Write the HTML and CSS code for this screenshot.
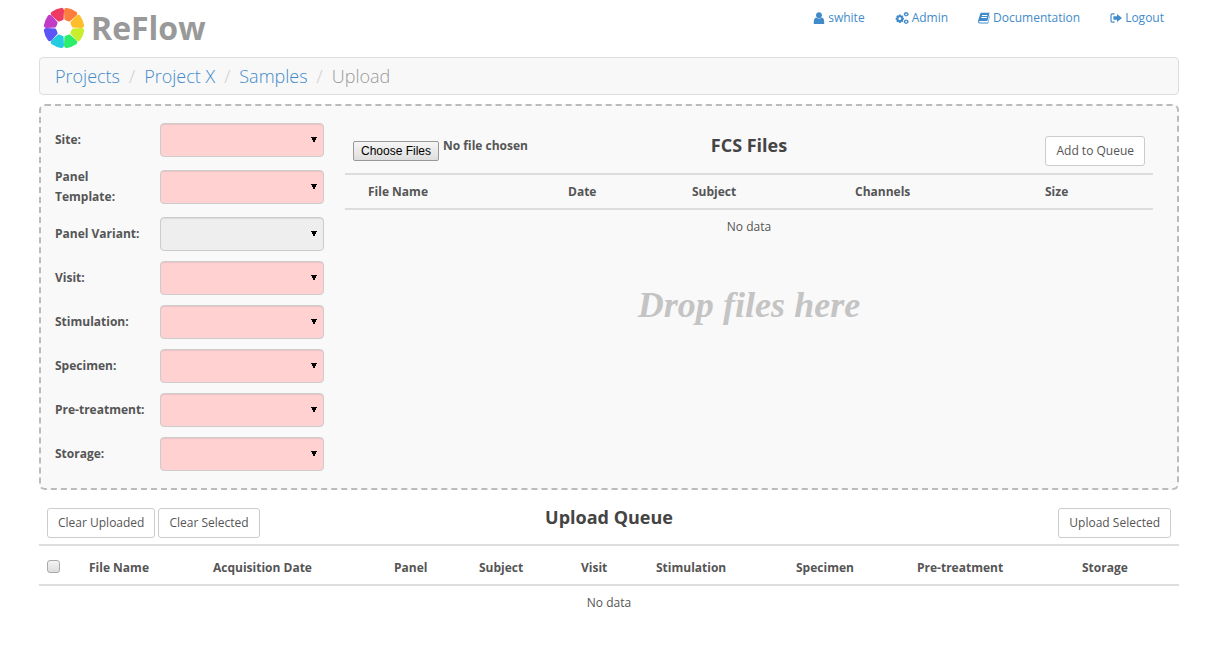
FILE: index.html
```html
<!DOCTYPE html>
<html lang="en">
<head>
    <meta charset="UTF-8">
    <title>ReFlow - Upload</title>
    <link rel="stylesheet" href="styles.css">
</head>
<body>
<div class="container">
    <header class="top">
        <a class="brand">
            <svg class="logo" viewBox="-22 -22 44 44">
                <defs>
                    <path id="petal" d="M-3-8.5 L-7-16.8 Q-8-20 -5.2-20.6 Q0-21.8 5.2-20.6 Q8-20 7-16.8 L3-8.5 Q0-7-3-8.5Z"/>
                </defs>
                <use href="#petal" fill="#ef3a62" transform="rotate(-22.5)"/>
                <use href="#petal" fill="#ff7e3e" transform="rotate(22.5)"/>
                <use href="#petal" fill="#ffbd2c" transform="rotate(67.5)"/>
                <use href="#petal" fill="#c9ee2c" transform="rotate(112.5)"/>
                <use href="#petal" fill="#2cee6a" transform="rotate(157.5)"/>
                <use href="#petal" fill="#22cde0" transform="rotate(202.5)"/>
                <use href="#petal" fill="#5b55f6" transform="rotate(247.5)"/>
                <use href="#petal" fill="#c03cc6" transform="rotate(292.5)"/>
                <circle r="8" fill="#fff"/>
            </svg>
            <span class="brand-name">ReFlow</span>
        </a>
        <nav class="top-nav">
            <a>
                <svg class="icon" viewBox="0 0 12 12"><circle cx="6" cy="3.2" r="2.9"/><path d="M0.8 12 Q0.4 6.2 3 5.6 Q6 7.4 9 5.6 Q11.6 6.2 11.2 12Z"/></svg>
                swhite
            </a>
            <a>
                <svg class="icon icon-wide" viewBox="0 0 14 12"><path fill-rule="evenodd" d="M4 2.6 L5.6 2.6 L6 3.7 L7.2 3.2 L8.3 4.3 L7.8 5.4 L9 5.9 L9 7.5 L7.8 8 L8.3 9.2 L7.2 10.3 L6 9.8 L5.6 10.9 L4 10.9 L3.6 9.8 L2.4 10.3 L1.3 9.2 L1.8 8 L0.6 7.5 L0.6 5.9 L1.8 5.4 L1.3 4.3 L2.4 3.2 L3.6 3.7Z M4.8 5.3 A1.4 1.4 0 1 0 4.8 8.1 A1.4 1.4 0 1 0 4.8 5.3Z"/><path fill-rule="evenodd" d="M11 0 L12.6 0.6 L13.8 2 L13.2 3.6 L11 4.6 L9.2 3.6 L8.6 2 L9.6 0.6Z M11.2 1.4 A0.9 0.9 0 1 0 11.2 3.2 A0.9 0.9 0 1 0 11.2 1.4Z"/><path fill-rule="evenodd" d="M11 7.4 L12.6 8 L13.8 9.4 L13.2 11 L11 12 L9.2 11 L8.6 9.4 L9.6 8Z M11.2 8.8 A0.9 0.9 0 1 0 11.2 10.6 A0.9 0.9 0 1 0 11.2 8.8Z"/></svg>
                Admin
            </a>
            <a>
                <svg class="icon" viewBox="0 0 12 12"><path d="M2.6 0.8 L11.6 0.8 L9.4 9 L1.6 9 Q1 9 1.2 10 Q1.4 10.6 2 10.6 L9.8 10.6 L11.6 3.4 L12 3.6 L10.2 11.6 L1.8 11.6 Q0 11.4 0 9.4 Q0 8.8 0.2 8.2Z M4 3 L4 3.9 L9.2 3.9 L9.4 3Z M3.4 5 L3.4 5.9 L8.7 5.9 L8.9 5Z" fill-rule="evenodd"/></svg>
                Documentation
            </a>
            <a>
                <svg class="icon" viewBox="0 0 12 12"><path d="M4.6 1.2 L2.4 1.2 Q0.4 1.2 0.4 3.2 L0.4 8.8 Q0.4 10.8 2.4 10.8 L4.6 10.8 L4.6 9.6 L2.4 9.6 Q1.6 9.6 1.6 8.8 L1.6 3.2 Q1.6 2.4 2.4 2.4 L4.6 2.4Z"/><path d="M7 2 L12 6 L7 10 L7 7.7 L3.4 7.7 L3.4 4.3 L7 4.3Z"/></svg>
                Logout
            </a>
        </nav>
    </header>

    <ol class="breadcrumb">
        <li><a>Projects</a></li>
        <li><a>Project X</a></li>
        <li><a>Samples</a></li>
        <li class="active">Upload</li>
    </ol>

    <section class="drop-panel">
        <form class="category-form">
            <div class="form-row"><label>Site:</label><select class="pick required"></select></div>
            <div class="form-row tall"><label>Panel Template:</label><select class="pick required"></select></div>
            <div class="form-row"><label>Panel Variant:</label><select class="pick"></select></div>
            <div class="form-row"><label>Visit:</label><select class="pick required"></select></div>
            <div class="form-row"><label>Stimulation:</label><select class="pick required"></select></div>
            <div class="form-row"><label>Specimen:</label><select class="pick required"></select></div>
            <div class="form-row"><label>Pre-treatment:</label><select class="pick required"></select></div>
            <div class="form-row"><label>Storage:</label><select class="pick required"></select></div>
        </form>

        <div class="file-area">
            <div class="toolbar fcs-toolbar">
                <div class="chooser"><input type="file" multiple></div>
                <h3>FCS Files</h3>
                <div class="right"><button class="btn">Add to Queue</button></div>
            </div>
            <div class="thead fcs-cols">
                <span>File Name</span><span>Date</span><span>Subject</span><span>Channels</span><span>Size</span>
            </div>
            <p class="no-data">No data</p>
            <p class="drop-hint">Drop files here</p>
        </div>
    </section>

    <section class="queue">
        <div class="toolbar queue-toolbar">
            <div class="btn-group">
                <button class="btn">Clear Uploaded</button>
                <button class="btn">Clear Selected</button>
            </div>
            <h3>Upload Queue</h3>
            <div class="right"><button class="btn">Upload Selected</button></div>
        </div>
        <div class="thead queue-cols">
            <span><input type="checkbox" class="check"></span>
            <span>File Name</span><span>Acquisition Date</span><span>Panel</span><span>Subject</span>
            <span>Visit</span><span>Stimulation</span><span>Specimen</span><span>Pre-treatment</span><span>Storage</span>
        </div>
        <p class="no-data">No data</p>
    </section>
</div>
</body>
</html>
```

FILE: styles.css
```css
body {
    margin: 0;
    font-family: "Open Sans", sans-serif;
    font-size: 12px;
    line-height: 20px;
    color: #555;
    background: #fff;
}
a {
    color: #428bca;
    text-decoration: none;
}
.container {
    width: 1140px;
    margin: 0 auto;
}

/* header */
.top {
    height: 57px;
    display: flex;
    justify-content: space-between;
}
.brand {
    display: flex;
    align-items: flex-start;
    padding: 7px 0 0 4px;
}
.logo {
    width: 42px;
    height: 42px;
}
.brand-name {
    margin-left: 6px;
    font-size: 32px;
    line-height: 42px;
    font-weight: 700;
    color: #999;
}
.top-nav {
    display: flex;
    gap: 30px;
    padding: 8px 15px 0 0;
    font-size: 12px;
}
.top-nav a {
    display: flex;
    align-items: center;
    gap: 3px;
    height: 20px;
}
.icon {
    width: 12px;
    height: 12px;
    fill: #428bca;
}
.icon-wide {
    width: 14px;
}

/* breadcrumb */
.breadcrumb {
    display: flex;
    height: 36px;
    margin: 0 0 9px;
    padding: 0 15px;
    list-style: none;
    align-items: center;
    font-size: 18px;
    font-weight: 300;
    background: #f8f8f8;
    border: 1px solid #ddd;
    border-radius: 4px;
}
.breadcrumb li + li::before {
    content: "/";
    padding: 0 9px;
    color: #ccc;
}
.breadcrumb .active {
    color: #999;
}

/* upload panel */
.drop-panel {
    display: flex;
    height: 382px;
    background: #f9f9f9;
    border: 2px dashed #bbb;
    border-radius: 6px;
}
.category-form {
    width: 269px;
    padding: 17px 0 0 14px;
    flex-shrink: 0;
}
.form-row {
    display: flex;
    align-items: center;
    height: 34px;
    margin-bottom: 10px;
}
.form-row.tall {
    height: 40px;
}
.form-row label {
    width: 95px;
    padding-right: 10px;
    font-weight: 700;
    flex-shrink: 0;
}
.pick {
    width: 164px;
    height: 34px;
    padding: 6px 12px;
    appearance: none;
    background-color: #eee;
    background-image: linear-gradient(to top right, transparent 50%, #000 50%), linear-gradient(to top left, transparent 50%, #000 50%);
    background-size: 3px 6px, 3px 6px;
    background-position: right 9px center, right 6px center;
    background-repeat: no-repeat;
    border: 1px solid #ccc;
    border-radius: 4px;
    box-shadow: inset 0 1px 1px rgba(0, 0, 0, .075);
}
.pick.required {
    background-color: #ffd1d1;
}
.file-area {
    width: 808px;
    margin-left: 21px;
    padding-top: 30px;
}
.toolbar {
    display: grid;
    grid-template-columns: 1fr auto 1fr;
    padding: 0 8px;
}
.toolbar h3 {
    margin: -1px 0 0;
    font-size: 18px;
    line-height: 20px;
    font-weight: 700;
    color: #444;
}
.right {
    text-align: right;
}
.fcs-toolbar {
    height: 37px;
}
.chooser input {
    height: 30px;
    font-family: "Open Sans", sans-serif;
    font-size: 12px;
    font-weight: 700;
    color: #555;
}
.chooser input::file-selector-button {
    position: relative;
    top: 5px;
    height: 20px;
    padding: 0 7px;
    margin-right: 4px;
    font: 12px "Liberation Sans", sans-serif;
    color: #000;
    background: linear-gradient(#f6f6f6, #dedede);
    border: 1px solid #999;
    border-radius: 2px;
}
.btn {
    height: 30px;
    padding: 0 10px 2px;
    font-family: "Open Sans", sans-serif;
    font-size: 12px;
    color: #555;
    background: #fff;
    border: 1px solid #ccc;
    border-radius: 3px;
}
.btn-group {
    display: flex;
    gap: 3px;
}

/* tables */
.thead {
    display: grid;
    align-items: center;
    height: 33px;
    font-weight: 700;
    border-top: 2px solid #ddd;
    border-bottom: 2px solid #ddd;
}
.fcs-cols {
    grid-template-columns: 200px 124px 163px 190px 108px;
    padding-left: 23px;
}
.queue-cols {
    grid-template-columns: 50px 124px 181px 85px 102px 75px 140px 121px 165px 97px;
    height: 38px;
}
.queue-cols span:not(:first-child) {
    padding-top: 6px;
}
.queue-cols span:first-child {
    padding-left: 8px;
}
.check {
    display: block;
    width: 13px;
    height: 13px;
    margin: 3px 0 0;
    appearance: none;
    background: linear-gradient(#f4f4f4, #dcdcdc);
    border: 1px solid #aaa;
    border-radius: 3px;
}
.no-data {
    margin: 0;
    padding-top: 7px;
    text-align: center;
}
.drop-hint {
    margin: 48px 0 0;
    text-align: center;
    font-family: "Liberation Serif", serif;
    font-size: 36px;
    line-height: 40px;
    font-style: italic;
    font-weight: 700;
    letter-spacing: .05px;
    color: #c4c4c4;
}
.queue {
    margin-top: 18px;
}
.queue-toolbar {
    height: 36px;
}
```
